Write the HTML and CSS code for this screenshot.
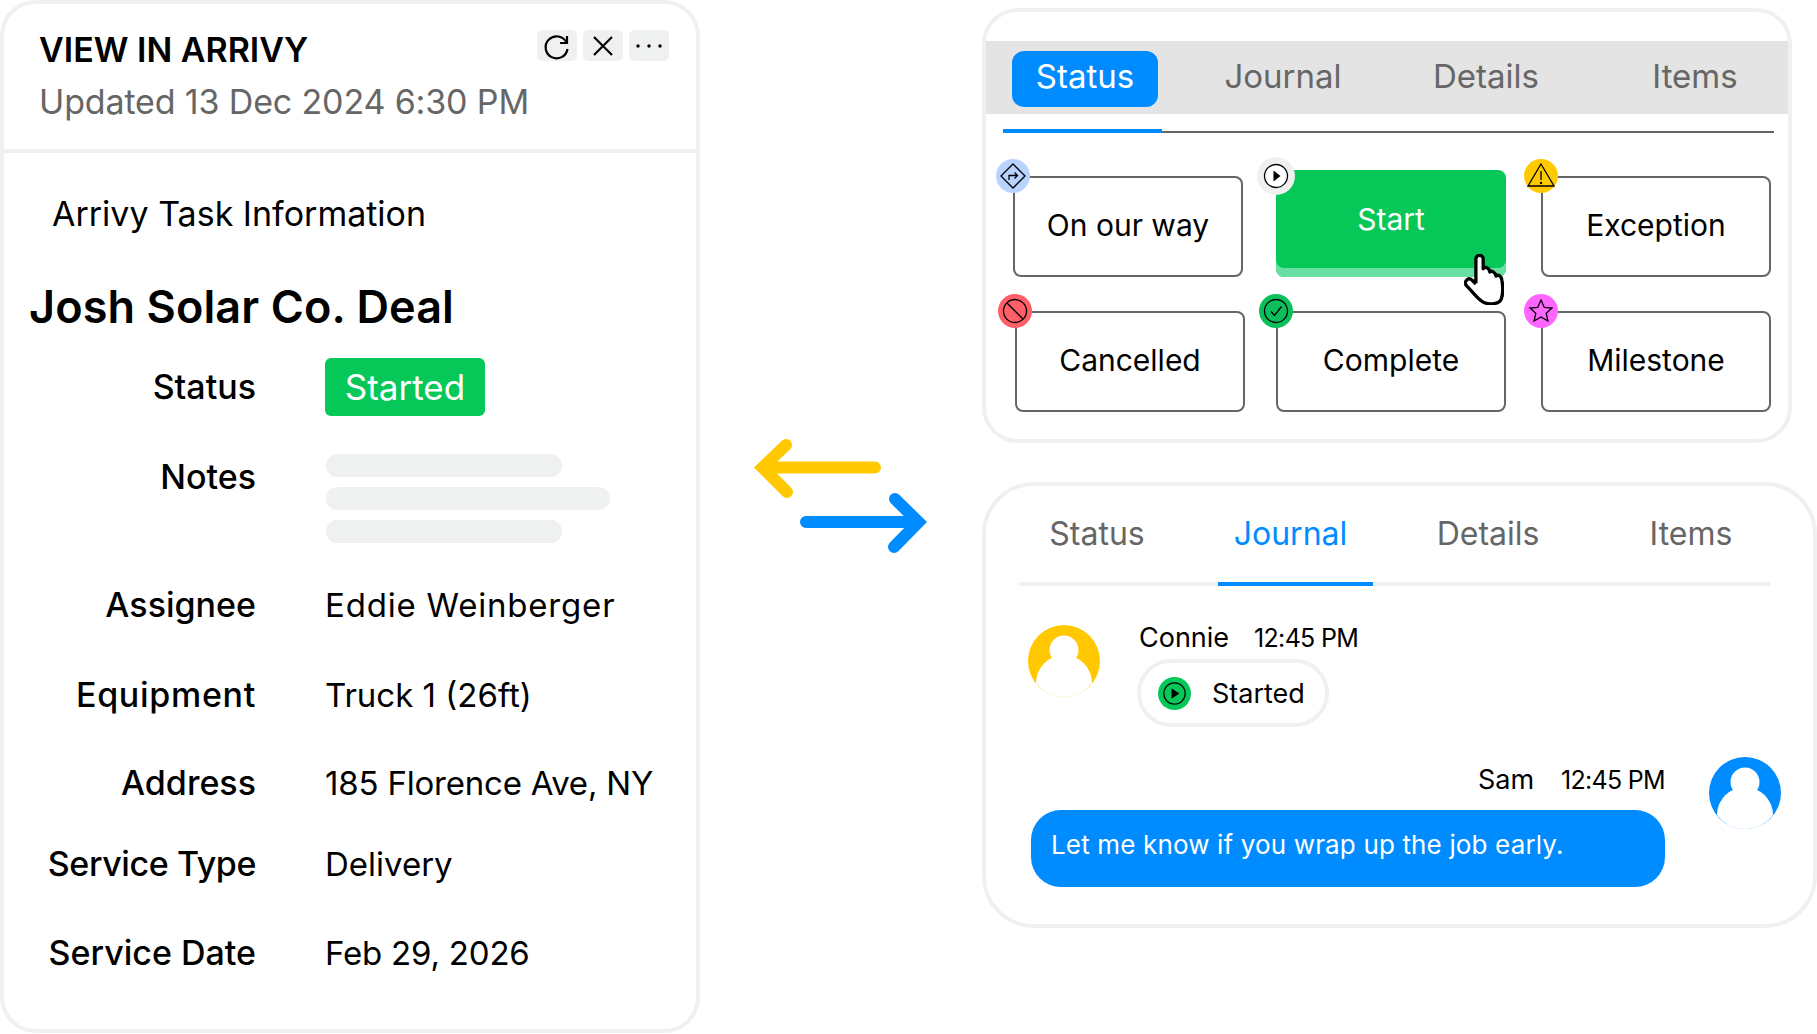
FILE: index.html
```html
<!DOCTYPE html>
<html lang="en">
<head>
<meta charset="utf-8">
<title>Arrivy</title>
<link rel="stylesheet" href="styles.css">
</head>
<body>
<div class="page">
  <section class="task-card">
    <header class="task-head">
      <div>
        <div class="task-title">VIEW IN ARRIVY</div>
        <div class="task-updated">Updated 13 Dec 2024 6:30 PM</div>
      </div>
      <div class="task-actions">
        <span class="act"><svg viewBox="0 0 30 30" width="30" height="30"><path d="M24.5 11.5A11 11 0 1 0 25.5 18" class="ico"/><path d="M25 5v7h-7" class="ico"/></svg></span>
        <span class="act"><svg viewBox="0 0 30 30" width="30" height="30"><path d="M6 6l18 18M24 6L6 24" class="ico"/></svg></span>
        <span class="act"><svg viewBox="0 0 30 30" width="30" height="30"><circle cx="4" cy="15" r="1.7"/><circle cx="15" cy="15" r="1.7"/><circle cx="26" cy="15" r="1.7"/></svg></span>
      </div>
    </header>
    <div class="task-body">
      <div class="task-info">Arrivy Task Information</div>
      <h1 class="task-name">Josh Solar Co. Deal</h1>
      <div class="fields">
        <div class="label">Status</div><div class="value"><span class="badge">Started</span></div>
        <div class="label label-notes">Notes</div>
        <div class="skeleton"><span class="sk sk-s"></span><span class="sk sk-l"></span><span class="sk sk-s"></span></div>
        <div class="label">Assignee</div><div class="value value-wide">Eddie Weinberger</div>
        <div class="label label-wide">Equipment</div><div class="value">Truck 1 (26ft)</div>
        <div class="label">Address</div><div class="value value-tight">185 Florence Ave, NY</div>
        <div class="label label-tight">Service Type</div><div class="value">Delivery</div>
        <div class="label">Service Date</div><div class="value value-tight">Feb 29, 2026</div>
      </div>
    </div>
  </section>

  <svg class="arrows" viewBox="0 0 180 116" width="180" height="116">
    <path class="arrow-y" d="M125 30.5H12.5M36 8L12.5 30.5L37 55"/>
    <path class="arrow-b" d="M56 85H168.5M145 62L168.5 85L144 110"/>
  </svg>

  <div class="right">
    <section class="status-card">
      <div class="status-bar">
        <span class="bar-tab bar-active">Status</span>
        <span class="bar-tab bar-journal">Journal</span>
        <span class="bar-tab bar-details">Details</span>
        <span class="bar-tab bar-items">Items</span>
      </div>
      <div class="track"><span class="track-on"></span><span class="track-off"></span></div>
      <div class="states">
        <div class="state">On our way
          <span class="dot dot-way"><svg viewBox="0 0 34 34"><path class="ico1" d="M17 5L29 17L17 29L5 17Z"/><path class="ico1" d="M13 21v-4.500h8M18.500 13.500l3 3-3 3"/></svg></span>
        </div>
        <div class="state state-start">Start
          <span class="dot dot-start"><svg viewBox="0 0 38 38"><circle cx="19" cy="19" r="11.500" fill="#fff" stroke="#000" stroke-width="1.300"/><path d="M16.500 13.500L23.500 19L16.500 24.500Z" fill="#000"/></svg></span>
          <svg class="hand" viewBox="0 0 121 153" width="40" height="51"><path d="M36 88V14C36 0 58 0 58 14V44C64 36 76 40 78 54C84 48 94 54 97 66C104 60 114 66 115 80C118 100 118 120 113 135C106 152 78 153 62 147C44 140 34 122 8 96C-2 84 12 68 24 78L36 90" fill="#fff" stroke="#000" stroke-width="10" stroke-linejoin="round"/></svg>
        </div>
        <div class="state state-shift">Exception
          <span class="dot dot-exc"><svg viewBox="0 0 34 34"><path class="ico1" d="M17 5L30 27H4Z"/><path class="ico1" d="M17 12v9"/><circle cx="17" cy="24" r="1.200"/></svg></span>
        </div>
        <div class="state state-shift">Cancelled
          <span class="dot dot-can"><svg viewBox="0 0 34 34"><circle class="ico1" cx="17" cy="17" r="11.500"/><path class="ico1" d="M9 9L25 25"/></svg></span>
        </div>
        <div class="state">Complete
          <span class="dot dot-com"><svg viewBox="0 0 34 34"><circle class="ico1" cx="17" cy="17" r="11.500"/><path class="ico1" d="M12 17.500l3.500 4L22.500 12.500"/></svg></span>
        </div>
        <div class="state state-shift">Milestone
          <span class="dot dot-mil"><svg viewBox="0 0 34 34"><path class="ico1" d="M17 6l3.300 7.300 7.700.8-5.800 5.200 1.700 7.700-6.900-4-6.900 4 1.700-7.700L6 14.100l7.700-.8Z"/></svg></span>
        </div>
      </div>
    </section>

    <section class="journal-card">
      <div class="j-tabs">
        <span class="j-tab j-status">Status</span>
        <span class="j-tab j-journal">Journal</span>
        <span class="j-tab j-details">Details</span>
        <span class="j-tab j-items">Items</span>
      </div>
      <div class="msg msg-in">
        <svg class="avatar avatar-in" viewBox="0 0 72 72" width="72" height="72"><circle class="av-bg-y" cx="36" cy="36" r="36"/><circle class="av-fg" cx="36" cy="25" r="14.500"/><path class="av-fg" d="M8 58A28 28 0 0 1 64 58A36 36 0 0 1 36 72A36 36 0 0 1 8 58Z"/></svg>
        <div class="msg-col">
          <div class="meta meta-in"><span>Connie</span><span class="time">12:45 PM</span></div>
          <div class="pill">
            <svg viewBox="0 0 34 34" width="33" height="33"><circle cx="17" cy="17" r="17" fill="#05c858"/><circle cx="17" cy="17" r="11" fill="none" stroke="#000" stroke-width="1.200"/><path d="M14 11.500L22 17L14 22.500Z"/></svg>
            <span>Started</span>
          </div>
        </div>
      </div>
      <div class="msg msg-out">
        <div class="msg-col msg-col-out">
          <div class="meta meta-out"><span>Sam</span><span class="time">12:45 PM</span></div>
          <div class="bubble">Let me know if you wrap up the job early.</div>
        </div>
        <svg class="avatar" viewBox="0 0 72 72" width="72" height="72"><circle class="av-bg-b" cx="36" cy="36" r="36"/><circle class="av-fg" cx="36" cy="25" r="14.500"/><path class="av-fg" d="M8 58A28 28 0 0 1 64 58A36 36 0 0 1 36 72A36 36 0 0 1 8 58Z"/></svg>
      </div>
    </section>
  </div>
</div>
</body>
</html>
```
FILE: styles.css
```css
* { box-sizing: border-box; }
html, body { margin: 0; background: #fff; }
body { font-family: Inter, "Liberation Sans", sans-serif; color: #000; overflow: hidden; }
.page { display: flex; align-items: flex-start; width: 1817px; height: 1034px; }

.task-card { width: 700px; height: 1033px; flex: none; border: 4px solid #eff1f1; border-radius: 36px; }
.task-head { display: flex; justify-content: space-between; height: 145px; padding: 26px 27px 0 35px; }
.task-title { font-size: 34px; font-weight: 600; line-height: 40px; }
.task-updated { font-size: 34px; line-height: 40px; margin-top: 12px; color: #666; letter-spacing: -.15px; }
.task-actions { display: flex; gap: 6px; height: 31px; }
.act { width: 40px; height: 31px; background: #eff1f1; border-radius: 5px; display: flex; align-items: center; justify-content: center; }
.ico { fill: none; stroke: #000; stroke-width: 2.2; }

.task-body { border-top: 4px solid #eff1f1; padding-left: 25px; }
.task-info { font-size: 34px; line-height: 40px; margin: 41px 0 0 23px; }
.task-name { font-size: 45px; font-weight: 600; line-height: 56px; margin: 45px 0 0; letter-spacing: .1px; }
.fields { display: grid; grid-template-columns: 227px 1fr; column-gap: 69px; grid-template-rows: 58px 127px 82px 90px 88px 81px 89px; align-items: end; margin-top: 23px; }
.label { font-size: 34px; font-weight: 500; line-height: 40px; text-align: right; }
.fields .label:first-child { line-height: 58px; }
.label-notes { height: 89px; line-height: 46px; }
.label-wide { letter-spacing: .7px; }
.label-tight { letter-spacing: -.4px; }
.value { font-size: 33px; line-height: 40px; }
.value-wide { letter-spacing: .8px; }
.value-tight { letter-spacing: -.2px; }
.badge { display: block; width: 160px; height: 58px; border-radius: 6px; background: #05c858; color: #fff; font-size: 35px; line-height: 58px; text-align: center; }
.skeleton { display: flex; flex-direction: column; gap: 10px; height: 89px; margin-left: 1px; }
.sk { display: block; height: 23px; border-radius: 12px; background: #eff1f1; }
.sk-s { width: 236px; }
.sk-l { width: 284px; }

.arrows { flex: none; margin: 437px 0 0 50px; }
.arrow-y, .arrow-b { fill: none; stroke-width: 12; stroke-linecap: round; stroke-linejoin: miter; }
.arrow-y { stroke: #ffc800; }
.arrow-b { stroke: #008cff; }

.right { flex: none; width: 835px; margin-left: 52px; }
.status-card { width: 810px; height: 435px; margin-top: 8px; border: 4px solid #eff1f1; border-radius: 36px; }
.status-bar { display: flex; height: 73px; margin-top: 29px; padding: 10px 0 0 26px; background: #e4e4e4; }
.bar-tab { width: 130px; height: 56px; font-size: 33px; line-height: 50px; text-align: center; color: #666; }
.bar-active { width: 146px; background: #008cff; color: #fff; border-radius: 12px; }
.bar-journal { margin-left: 60px; }
.bar-details { margin-left: 73px; }
.bar-items { margin-left: 79px; }
.track { display: flex; align-items: flex-end; height: 4px; margin: 15px 14px 0 17px; }
.track-on { width: 159px; height: 4px; background: #008cff; }
.track-off { flex: 1; height: 2px; background: #666; }
.states { display: grid; grid-template-columns: repeat(3, 230px); grid-template-rows: 107px 101px; column-gap: 33px; row-gap: 34px; align-items: end; margin: 37px 0 0 27px; }
.state { position: relative; width: 230px; height: 101px; border: 2px solid #666; border-radius: 8px; font-size: 30px; line-height: 94px; text-align: center; }
.state-start { height: 107px; border: 0; background: #05c858; color: #fff; box-shadow: inset 0 -9px 0 #69dfa2; line-height: 98px; }
.state-shift { margin-left: 2px; }
.dot { position: absolute; left: -19px; top: -19px; width: 34px; height: 34px; border-radius: 50%; }
.dot svg { display: block; width: 100%; height: 100%; }
.ico1 { fill: none; stroke: #000; stroke-width: 1.300; }
.dot-way { background: #b9d3ff; }
.dot-exc { background: #ffcb00; }
.dot-can { background: #ff5f67; }
.dot-com { background: #0abf5c; }
.dot-mil { background: #ff66ff; }
.dot-start { left: -19px; top: -13px; width: 38px; height: 38px; background: #eff1f1; }
.hand { position: absolute; left: 188px; top: 84px; }

.journal-card { width: 835px; height: 446px; margin-top: 39px; border: 4px solid #eff1f1; border-radius: 52px; }
.j-tabs { display: flex; width: 751px; margin: 20px 0 0 33px; box-shadow: inset 0 -4px 0 #eff1f1; }
.j-tab { height: 80px; padding-bottom: 24px; font-size: 32px; line-height: 56px; text-align: center; color: #666; border-bottom: 4px solid transparent; }
.j-status { width: 156px; }
.j-journal { width: 155px; margin-left: 43px; padding-right: 10px; color: #008cff; border-bottom-color: #008cff; }
.j-details { width: 160px; margin-left: 35px; }
.j-items { width: 158px; margin-left: 44px; }

.msg { display: flex; }
.msg-in { gap: 37px; margin: 37px 0 0 42px; }
.avatar { flex: none; display: block; }
.avatar-in { margin-top: 2px; }
.av-bg-y { fill: #ffc800; }
.av-bg-b { fill: #008cff; }
.av-fg { fill: #fff; }
.meta { display: flex; font-size: 27px; line-height: 30px; }
.time { font-size: 25px; letter-spacing: -.7px; }
.meta-in { gap: 25px; padding-left: 2px; }
.meta-out { gap: 27px; justify-content: flex-end; }
.pill { display: inline-flex; align-items: center; gap: 21px; height: 68px; margin-top: 6px; padding: 0 20px 0 17px; border: 4px solid #eff1f1; border-radius: 34px; font-size: 27px; }
.msg-out { gap: 44px; margin: 30px 0 0 45px; }
.msg-col-out { width: 634px; padding-top: 8px; }
.bubble { height: 77px; margin-top: 15px; padding-left: 20px; border-radius: 30px; background: #008cff; color: #fff; font-size: 26px; line-height: 70px; letter-spacing: .15px; }
```
